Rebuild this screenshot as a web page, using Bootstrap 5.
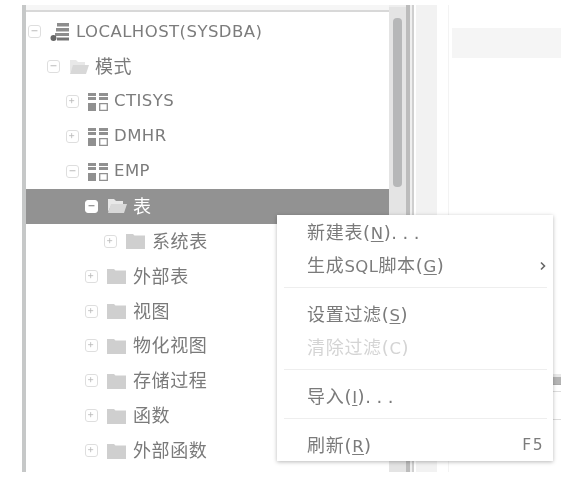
<!DOCTYPE html>
<html lang="en">
<head>
  <meta charset="UTF-8">
  <title>DM Manager</title>
  <link href="https://cdn.jsdelivr.net/npm/bootstrap@5.3.0/dist/css/bootstrap.min.css" rel="stylesheet">
  <style>
    body {
      background: #fff;
      height: 481px;
      overflow: hidden;
      font-family: "DejaVu Sans", "Noto Sans CJK SC", sans-serif;
      font-size: 15px;
      color: #707070;
    }
    .shell { height: 472px; padding: 5px 0 0 22px; filter: blur(.65px); }
    .tree-wrap { width: 367px; border-left: 4px solid #c6c8c8; }
    .tree-head { height: 7px; background: #f6f6f6; border-bottom: 2px solid #d8d8d8; }
    .tree-row { height: 34.9px; padding-left: calc(2px + 19px * var(--lvl)); white-space: nowrap; }
    .tree-row:first-child { margin-top: 2.5px; }
    .tree-row.picked { background: #929292; color: #fff; }
    .cjk { font-size: 18px; letter-spacing: .6px; color: #7a7a7a; }
    .picked .cjk { color: #fff; }
    .lat { font-size: 16.5px; letter-spacing: .45px; color: #7c7c7c; }
    .expander { width: 13px; height: 13px; flex: none; border: 1px solid #dedede; border-radius: 3px; margin-right: 9px; display: block; color: #bbb; }
    .picked .expander { background: #fff; border-color: #fff; color: #777; }
    .node-icon { width: 20px; height: 18px; flex: none; margin-right: 6px; }
    .vscroll { width: 17px; background: #e4e4e4; padding: 11px 4px 0; border-top: 2px solid #eee; }
    .vthumb { height: 169px; background: #b6b7b8; border-radius: 4px; }
    .split-a { width: 4px; background: #bcbcbc; }
    .split-b { width: 2px; background: #efefef; }
    .split-c { width: 2px; background: #cfcfcf; }
    .split-d { width: 2px; }
    .split-e { width: 21px; background: #f2f2f2; }
    .side-pane { width: 133px; margin-left: 11px; border-left: 1px solid #f3f3f3; padding: 23px 0 0 3px; }
    .side-box { width: 109px; height: 30px; background: #f5f5f5; }
    .side-bar { width: 109px; height: 46px; margin-top: 316px; border-top: 3px solid #e8e8e8; border-bottom: 1px solid #ddd; }
    .side-bar div { height: 8px; background: #b4b4b4; border-bottom: 1px solid #aaa; margin-bottom: 6px; }
    .side-bar p { margin: 0; border-top: 1px solid #ddd; }
    .ctx-menu {
      left: 277px; top: 215px; width: 276px; min-width: 0; padding: 1px 0 0; height: 246px;
      border: 0; border-radius: 0; box-shadow: 0 1px 4px rgba(0,0,0,.28);
      font-size: 18px; letter-spacing: .7px; color: #7a7a7a;
    }
    .ctx-menu .dropdown-item { height: 33px; padding: 0 7px 0 30px; color: #7a7a7a; }
    .ctx-menu .dropdown-item.disabled { color: #d4d4d4; }
    .ctx-menu .dropdown-item.disabled .lat { color: #d4d4d4; }
    .ctx-menu .dropdown-divider { margin: 4.5px 6px 11px 7px; border-color: #eeeeee; opacity: 1; }
    .ctx-menu .tight { margin-top: 4px; }
    .ctx-menu u { text-underline-offset: 2px; text-decoration-thickness: 1px; }
    .dots { letter-spacing: 5.5px; }
    .key { font-size: 15.5px; letter-spacing: 1.5px; margin-right: 2px; }
  </style>
</head>
<body>

<svg width="0" height="0" class="d-block">
  <symbol id="ico-minus" viewBox="0 0 13 13"><path d="M3 5.500h7" stroke="currentColor" stroke-width="1.200"/></symbol>
  <symbol id="ico-plus" viewBox="0 0 13 13"><path d="M2.500 5.500h6M5.500 2.500v6" stroke="currentColor" stroke-width="1"/></symbol>
  <symbol id="ico-server" viewBox="0 0 20 18">
    <path d="M7 0h12v3.500H7zM6 5h13v3.500H6zM5 10h14v3H5z" fill="#8d8d8d"/>
    <path d="M7 14.500h12v3H7z" fill="#757575"/>
    <circle cx="3.500" cy="15" r="3" fill="#666"/>
  </symbol>
  <symbol id="ico-open" viewBox="0 0 20 18">
    <path d="M1 2h6l2 2h7v3H5L1 15z" fill="#e8e8e8"/>
    <path d="M1 16l3-9h16l-3 9z" fill="#d8d8d8"/>
  </symbol>
  <symbol id="ico-closed" viewBox="0 0 20 18">
    <path d="M0 2h7l1.500 1.500H19V17H0z" fill="#cfcfcf"/>
  </symbol>
  <symbol id="ico-schema" viewBox="0 0 20 18">
    <path d="M0 0h8v3H0zM0 4h8v3H0zM11 0h9v3h-9zM11 4h9v3h-9zM0 10h8v8H0z" fill="#909090"/>
    <path d="M11.700 10.700h7.600v6.600h-7.600z" fill="none" stroke="#909090" stroke-width="1.300"/>
  </symbol>
</svg>

<div class="shell d-flex">
  <div class="tree-wrap flex-none">
    <div class="tree-head"></div>
    <div>
      <div class="tree-row d-flex align-items-center" style="--lvl:0">
        <svg class="expander"><use href="#ico-minus"/></svg><svg class="node-icon"><use href="#ico-server"/></svg><span class="lat">LOCALHOST(SYSDBA)</span>
      </div>
      <div class="tree-row d-flex align-items-center" style="--lvl:1">
        <svg class="expander"><use href="#ico-minus"/></svg><svg class="node-icon"><use href="#ico-open"/></svg><span class="cjk">模式</span>
      </div>
      <div class="tree-row d-flex align-items-center" style="--lvl:2">
        <svg class="expander"><use href="#ico-plus"/></svg><svg class="node-icon"><use href="#ico-schema"/></svg><span class="lat">CTISYS</span>
      </div>
      <div class="tree-row d-flex align-items-center" style="--lvl:2">
        <svg class="expander"><use href="#ico-plus"/></svg><svg class="node-icon"><use href="#ico-schema"/></svg><span class="lat">DMHR</span>
      </div>
      <div class="tree-row d-flex align-items-center" style="--lvl:2">
        <svg class="expander"><use href="#ico-minus"/></svg><svg class="node-icon"><use href="#ico-schema"/></svg><span class="lat">EMP</span>
      </div>
      <div class="tree-row picked d-flex align-items-center" style="--lvl:3">
        <svg class="expander"><use href="#ico-minus"/></svg><svg class="node-icon"><use href="#ico-open"/></svg><span class="cjk">表</span>
      </div>
      <div class="tree-row d-flex align-items-center" style="--lvl:4">
        <svg class="expander"><use href="#ico-plus"/></svg><svg class="node-icon"><use href="#ico-closed"/></svg><span class="cjk">系统表</span>
      </div>
      <div class="tree-row d-flex align-items-center" style="--lvl:3">
        <svg class="expander"><use href="#ico-plus"/></svg><svg class="node-icon"><use href="#ico-closed"/></svg><span class="cjk">外部表</span>
      </div>
      <div class="tree-row d-flex align-items-center" style="--lvl:3">
        <svg class="expander"><use href="#ico-plus"/></svg><svg class="node-icon"><use href="#ico-closed"/></svg><span class="cjk">视图</span>
      </div>
      <div class="tree-row d-flex align-items-center" style="--lvl:3">
        <svg class="expander"><use href="#ico-plus"/></svg><svg class="node-icon"><use href="#ico-closed"/></svg><span class="cjk">物化视图</span>
      </div>
      <div class="tree-row d-flex align-items-center" style="--lvl:3">
        <svg class="expander"><use href="#ico-plus"/></svg><svg class="node-icon"><use href="#ico-closed"/></svg><span class="cjk">存储过程</span>
      </div>
      <div class="tree-row d-flex align-items-center" style="--lvl:3">
        <svg class="expander"><use href="#ico-plus"/></svg><svg class="node-icon"><use href="#ico-closed"/></svg><span class="cjk">函数</span>
      </div>
      <div class="tree-row d-flex align-items-center" style="--lvl:3">
        <svg class="expander"><use href="#ico-plus"/></svg><svg class="node-icon"><use href="#ico-closed"/></svg><span class="cjk">外部函数</span>
      </div>
    </div>
  </div>
  <div class="vscroll"><div class="vthumb"></div></div>
  <div class="split-a"></div>
  <div class="split-b"></div>
  <div class="split-c"></div>
  <div class="split-d"></div>
  <div class="split-e"></div>
  <div class="side-pane">
    <div class="side-box"></div>
    <div class="side-bar"><div></div><p></p></div>
  </div>

  <div class="dropdown-menu show ctx-menu">
    <a class="dropdown-item d-flex align-items-center" href="#"><span>新建表(<u class="lat">N</u>)<span class="dots">...</span></span></a>
    <a class="dropdown-item d-flex align-items-center justify-content-between" href="#"><span>生成<span class="lat">SQL</span>脚本(<u class="lat">G</u>)</span><svg width="6" height="10" viewBox="0 0 6 10"><path d="M1 1.500l3.500 3.500-3.500 3.500" fill="none" stroke="#666" stroke-width="1.600"/></svg></a>
    <hr class="dropdown-divider">
    <a class="dropdown-item d-flex align-items-center" href="#"><span>设置过滤(<u class="lat">S</u>)</span></a>
    <a class="dropdown-item disabled d-flex align-items-center" href="#"><span>清除过滤(<span class="lat">C</span>)</span></a>
    <hr class="dropdown-divider tight">
    <a class="dropdown-item d-flex align-items-center" href="#"><span>导入(<u class="lat">I</u>)<span class="dots">...</span></span></a>
    <hr class="dropdown-divider tight">
    <a class="dropdown-item d-flex align-items-center justify-content-between" href="#"><span>刷新(<u class="lat">R</u>)</span><span class="key lat">F5</span></a>
  </div>
</div>

<script src="https://cdn.jsdelivr.net/npm/bootstrap@5.3.0/dist/js/bootstrap.bundle.min.js"></script>
</body>
</html>
